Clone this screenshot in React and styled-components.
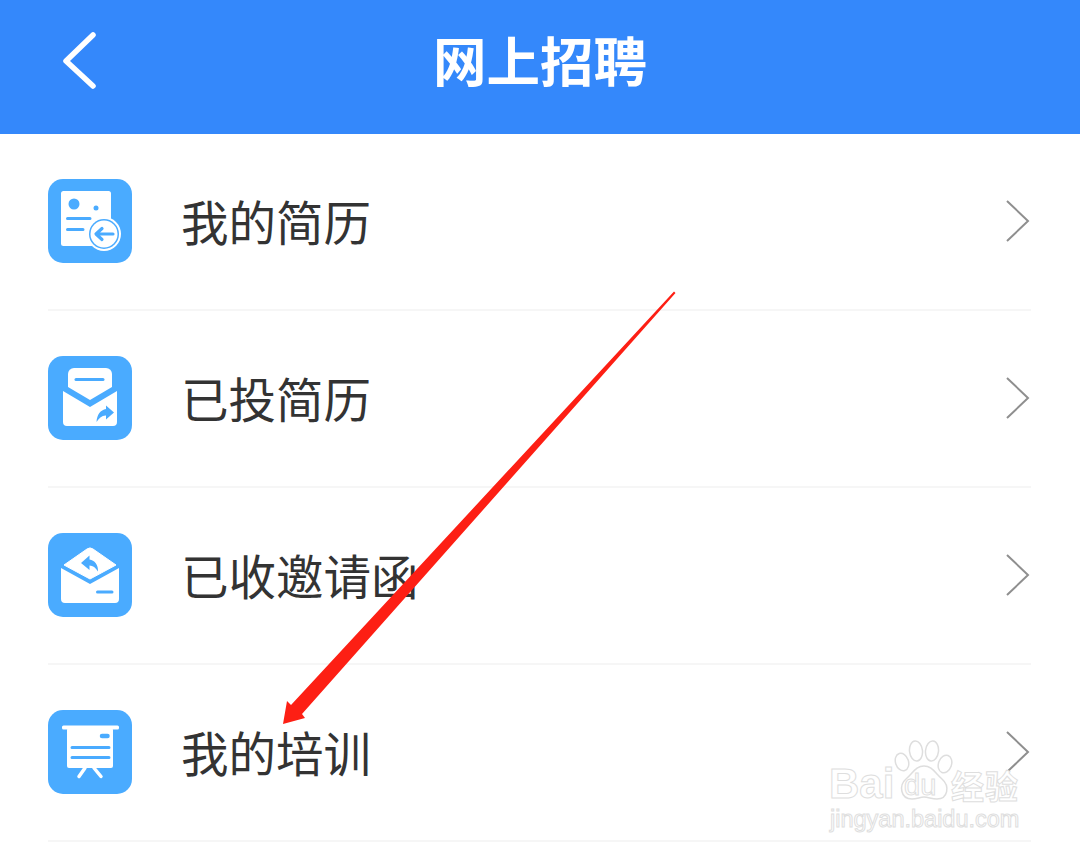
import React from 'react';
import styled, { createGlobalStyle } from 'styled-components';

const GlobalStyle = createGlobalStyle`
  html, body {
    margin: 0;
    padding: 0;
    background: #fff;
  }
`;

const Page = styled.div`
  position: relative;
  width: 1080px;
  height: 856px;
  overflow: hidden;
  background: #fff;
  font-family: "Noto Sans CJK SC", "Noto Sans", sans-serif;
`;

const Header = styled.header`
  display: grid;
  grid-template-columns: 1fr auto 1fr;
  align-items: center;
  height: 134px;
  box-sizing: border-box;
  padding: 0 62px 14px;
  background: #3488fb;
`;

const BackIcon = styled.svg`
  display: block;
  width: 36px;
  height: 58px;
`;

const Title = styled.h1`
  margin: 0 0 3px;
  font-size: 53.5px;
  font-weight: 700;
  line-height: 1;
  color: #fff;
`;

const List = styled.ul`
  margin: 0;
  padding: 0 49px 0 48px;
  list-style: none;
`;

const Row = styled.li`
  display: flex;
  align-items: center;
  height: 175px;
  border-bottom: 2px solid #f6f6f6;
`;

const IconBox = styled.svg`
  display: block;
  flex: none;
  width: 84px;
  height: 84px;
  margin-top: -1px;
  margin-right: 49px;
`;

const Label = styled.span`
  font-size: 47.5px;
  line-height: 1;
  color: #333;
  margin-bottom: 2px;
`;

const Chevron = styled.svg`
  display: block;
  flex: none;
  width: 26px;
  height: 44px;
  margin-left: auto;
  margin-top: -2px;
`;

const Watermark = styled.div`
  position: absolute;
  left: 830px;
  top: 740px;
  width: 200px;
  height: 96px;
  pointer-events: none;
`;

const WmBrand = styled.span`
  position: absolute;
  left: -1px;
  top: 22px;
  font-family: "Liberation Sans", sans-serif;
  font-size: 42px;
  font-weight: 700;
  line-height: 44px;
  color: #fff;
  -webkit-text-stroke: 1px #dedede;
`;

const WmCn = styled.span`
  position: absolute;
  left: 121px;
  top: 25px;
  font-size: 33px;
  font-weight: 700;
  line-height: 40px;
  letter-spacing: 1px;
  color: #fff;
  -webkit-text-stroke: 1px #dedede;
`;

const WmUrl = styled.span`
  position: absolute;
  left: 0;
  top: 64px;
  font-family: "Liberation Sans", sans-serif;
  font-size: 23.5px;
  line-height: 30px;
  color: #fff;
  -webkit-text-stroke: 1px #dedede;
`;

const WmPaw = styled.svg`
  position: absolute;
  left: 64px;
  top: 0;
  width: 60px;
  height: 64px;
`;

const WmDu = styled.span`
  position: absolute;
  left: 74px;
  top: 30px;
  font-family: "Liberation Sans", sans-serif;
  font-size: 29px;
  line-height: 30px;
  color: #fff;
  -webkit-text-stroke: 1px #dedede;
`;

const ArrowLayer = styled.svg`
  position: absolute;
  left: 0;
  top: 0;
  width: 1080px;
  height: 856px;
  pointer-events: none;
`;

const BLUE = '#4aabff';

const ResumeIcon = () => (
  <IconBox viewBox="0 0 84 84">
    <rect width="84" height="84" rx="15" fill={BLUE} />
    <rect x="13" y="12" width="50" height="55" rx="2.500" fill="#fff" />
    <circle cx="26" cy="25" r="5.500" fill={BLUE} />
    <circle cx="48" cy="29" r="2.500" fill={BLUE} />
    <path d="M19.500 39.500H42M19.500 50.500H35" stroke={BLUE} strokeWidth="3" strokeLinecap="round" />
    <circle cx="56" cy="55" r="17" fill="#fff" />
    <circle cx="56" cy="55" r="15" fill={BLUE} />
    <circle cx="56" cy="55" r="13.500" fill="#fff" />
    <path d="M65 55H48.500M54 49.500l-6 5.500 6 5.500" fill="none" stroke={BLUE} strokeWidth="3.200" strokeLinecap="round" strokeLinejoin="round" />
  </IconBox>
);

const SentIcon = () => (
  <IconBox viewBox="0 0 84 84">
    <rect width="84" height="84" rx="15" fill={BLUE} />
    <path d="M20 31V18a6 6 0 0 1 6-6h32a6 6 0 0 1 6 6v13L42 44Z" fill="#fff" />
    <path d="M28 23.500H55" stroke={BLUE} strokeWidth="3" strokeLinecap="round" />
    <path d="M15 35L42 51L69 35V66a4 4 0 0 1-4 4H19a4 4 0 0 1-4-4Z" fill="#fff" />
    <path d="M58 49.500L66 56.500L58 63.500V59.500C54 59.300 51.500 61.500 48.500 66C49 58.500 52.500 54 58 53Z" fill={BLUE} />
  </IconBox>
);

const InviteIcon = () => (
  <IconBox viewBox="0 0 84 84">
    <rect width="84" height="84" rx="15" fill={BLUE} />
    <path d="M39 16a5 5 0 0 1 6 0L68 32L42 46L16 32Z" fill="#fff" stroke="#fff" strokeLinejoin="round" />
    <path d="M13 35L42 51L71 35V66a4 4 0 0 1-4 4H17a4 4 0 0 1-4-4Z" fill="#fff" />
    <path d="M49.500 59H64" stroke={BLUE} strokeWidth="3" strokeLinecap="round" />
    <path d="M41.500 22.500L33 30L41.500 37V32.500C45 32.500 47.500 34.500 50 38.500C50.500 32 46.500 27 41.500 26.500Z" fill={BLUE} />
  </IconBox>
);

const TrainingIcon = () => (
  <IconBox viewBox="0 0 84 84">
    <rect width="84" height="84" rx="15" fill={BLUE} />
    <rect x="14" y="15.500" width="57" height="4" rx="1.500" fill="#fff" />
    <rect x="19" y="18" width="46" height="40" rx="2" fill="#fff" />
    <path d="M54 26H59.500" stroke={BLUE} strokeWidth="4.500" strokeLinecap="round" />
    <path d="M24 37.500H61M24 47.500H61" stroke={BLUE} strokeWidth="3" strokeLinecap="round" />
    <path d="M37 58L31 66.500M46 58L53 66.500" stroke="#fff" strokeWidth="3.500" strokeLinecap="round" />
  </IconBox>
);

const rows = [
  { label: '我的简历', Icon: ResumeIcon },
  { label: '已投简历', Icon: SentIcon },
  { label: '已收邀请函', Icon: InviteIcon },
  { label: '我的培训', Icon: TrainingIcon },
];

const App = () => (
  <Page>
    <GlobalStyle />
    <Header>
      <BackIcon viewBox="0 0 36 58" fill="none">
        <path d="M31 4L4 30L31 55" stroke="#fff" strokeWidth="5.500" strokeLinecap="round" strokeLinejoin="round" />
      </BackIcon>
      <Title>网上招聘</Title>
    </Header>
    <List>
      {rows.map(({ label, Icon }) => (
        <Row key={label}>
          <Icon />
          <Label>{label}</Label>
          <Chevron viewBox="0 0 26 44" fill="none">
            <path d="M2 2L23 22L2 42" stroke="#8f8f8f" strokeWidth="2" />
          </Chevron>
        </Row>
      ))}
    </List>
    <Watermark>
      <WmBrand>Bai</WmBrand>
      <WmPaw viewBox="0 0 60 64" fill="#fff" stroke="#dedede" strokeWidth="1.500">
        <ellipse cx="8" cy="22" rx="6.500" ry="9" transform="rotate(-18 8 22)" />
        <ellipse cx="22" cy="11" rx="6.500" ry="10" transform="rotate(-6 22 11)" />
        <ellipse cx="38" cy="11" rx="6.500" ry="10" transform="rotate(6 38 11)" />
        <ellipse cx="51" cy="24" rx="6.500" ry="9" transform="rotate(20 51 24)" />
        <path d="M30 26C22 26 19 33 12 39C5 45 6 59 18 59C23 59 26 57 30 57C34 57 38 59 43 59C54 59 56 46 48 39C41 33 38 26 30 26Z" />
      </WmPaw>
      <WmDu>du</WmDu>
      <WmCn>经验</WmCn>
      <WmUrl>jingyan.baidu.com</WmUrl>
    </Watermark>
    <ArrowLayer viewBox="0 0 1080 856">
      <path d="M674 291.500L675.500 293L302 714L305 718L283 724L287 701L291 705Z" fill="#fd1f14" />
    </ArrowLayer>
  </Page>
);

export default App;
